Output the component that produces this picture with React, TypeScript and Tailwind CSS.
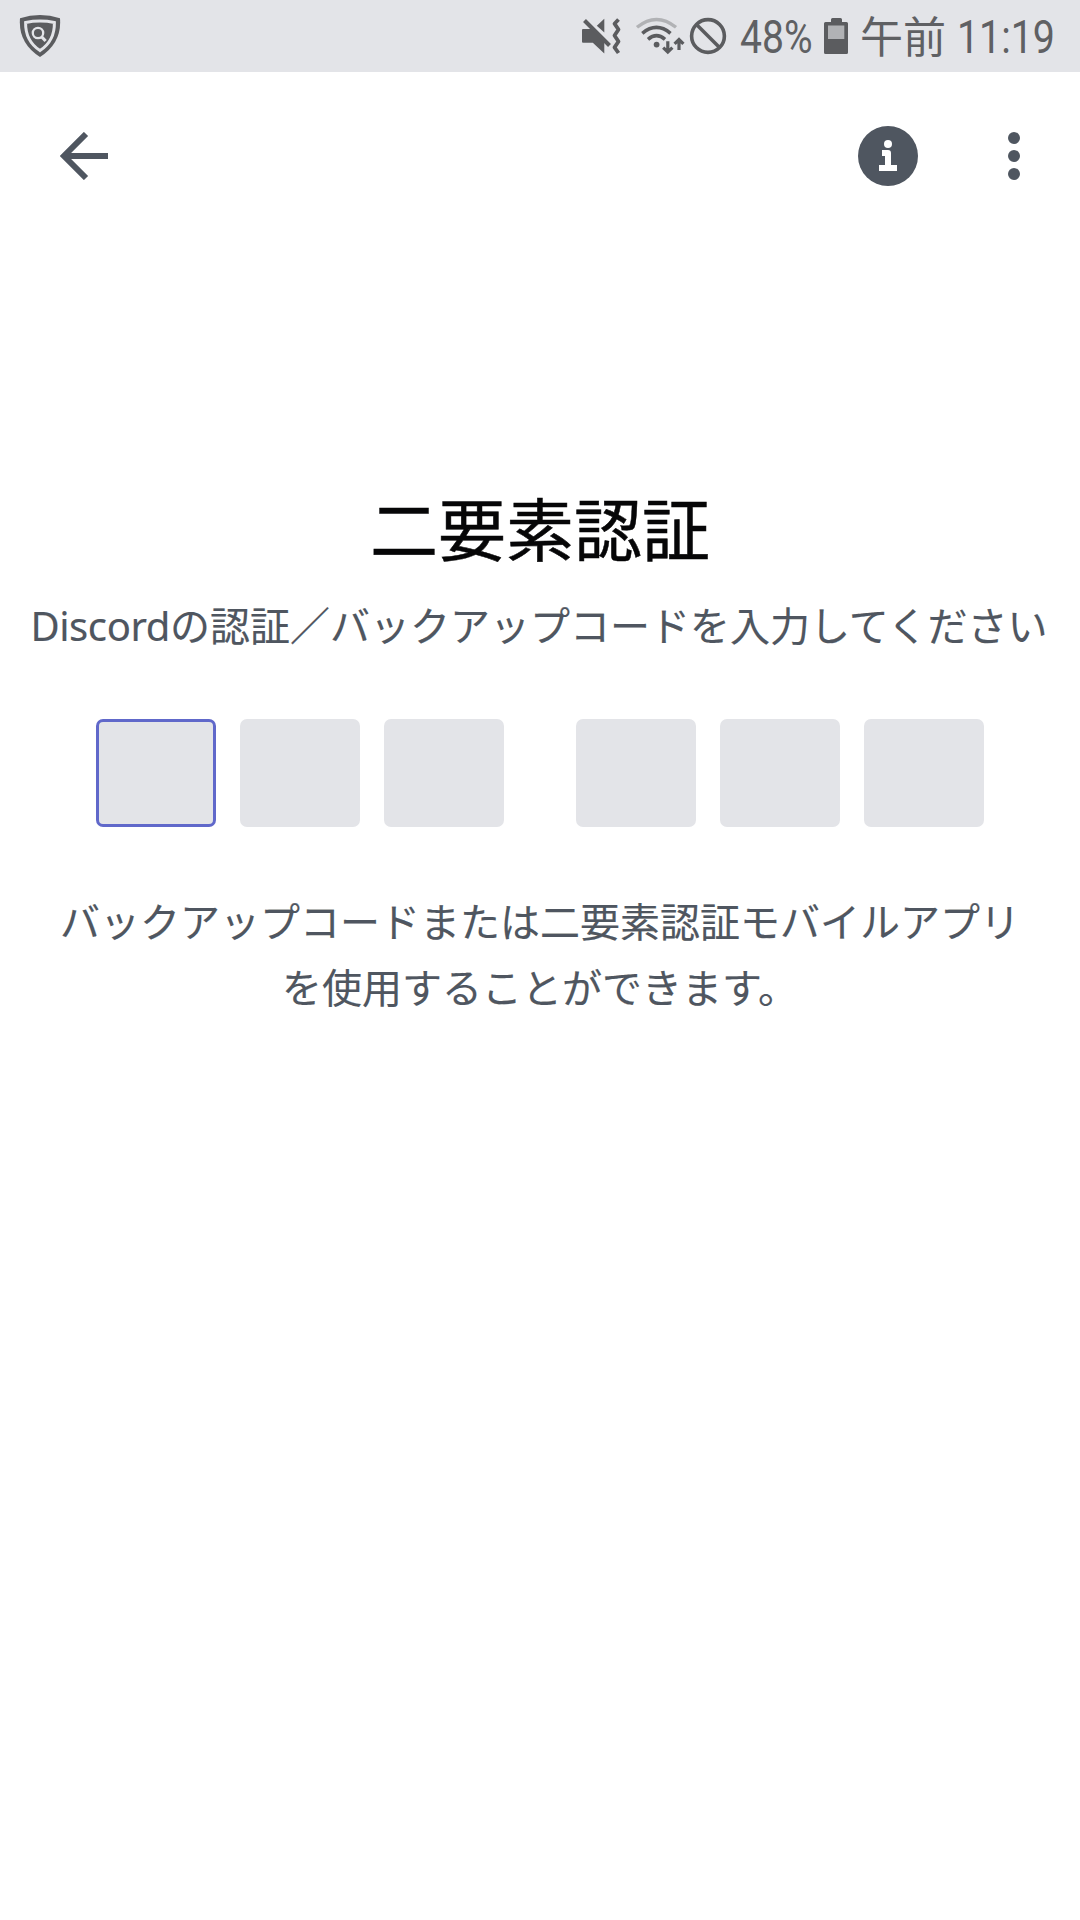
import React from 'react';

const GLYPH = '#5b5c5f';

function ShieldIcon() {
  return (
    <svg className="ml-[19px] h-[42px] w-[42px] shrink-0" viewBox="19 15 42 42" fill="none">
      <path d="M20 18.2Q40 11.8 60 18.2Q62 43 40 57Q18 43 20 18.2Z" fill={GLYPH} />
      <path d="M25.6 22.4Q40 19.8 54.4 22.4Q54.8 41 40 50.6Q25.2 41 25.6 22.4Z" fill={GLYPH} stroke="#e3e4e8" strokeWidth="3" />
      <circle cx="38" cy="33" r="5.2" stroke="#e3e4e8" strokeWidth="2.3" />
      <path d="M41.8 37L45.6 41" stroke="#e3e4e8" strokeWidth="3.2" />
    </svg>
  );
}

function MuteVibrateIcon() {
  return (
    <svg className="ml-[520px] h-[38px] w-[40px] shrink-0" viewBox="581 17 40 38" fill="none">
      <path d="M604.3 18.8V32.5L596.8 25.8Z" fill={GLYPH} />
      <path d="M583 29H591L604.3 42V53.5L592.8 42.7H583Q582 42.7 582 41.7V30Q582 29 583 29Z" fill={GLYPH} />
      <path d="M584.5 20.5L609.5 45.5" stroke={GLYPH} strokeWidth="4" />
      <path d="M618.5 19.5L614.5 23.7L618.5 29.5L614.5 35.5L618.5 41.5L614.5 47.3L618.5 53" stroke={GLYPH} strokeWidth="3.8" strokeLinejoin="round" />
    </svg>
  );
}

function WifiIcon() {
  return (
    <svg className="ml-[14px] h-[38px] w-[50px] shrink-0" viewBox="635 16 50 38" fill="none">
      <path d="M637 26.3Q656.5 10.5 676 26.3" stroke="#b1b2b5" strokeWidth="3.4" />
      <path d="M642.3 32.3Q656.5 20.5 670.5 32.3" stroke={GLYPH} strokeWidth="3.6" />
      <path d="M648 38.3Q656.5 31 665 38.3" stroke={GLYPH} strokeWidth="3.6" />
      <circle cx="656.6" cy="43.6" r="2.9" fill={GLYPH} />
      <path d="M667.8 40.2V51M663.2 46.6L667.8 51L672.4 46.6" stroke={GLYPH} strokeWidth="3.2" />
      <path d="M679 49V38.5M674.6 42.8L679 38.4L683.4 42.8" stroke={GLYPH} strokeWidth="3.2" />
    </svg>
  );
}

function BlockedIcon() {
  return (
    <svg className="ml-[4px] h-[38px] w-[38px] shrink-0" viewBox="689 16 38 38" fill="none" stroke={GLYPH} strokeWidth="3.6">
      <circle cx="708" cy="35" r="16.4" />
      <path d="M696.5 23.5L719.5 46.5" />
    </svg>
  );
}

function BatteryIcon() {
  return (
    <svg className="ml-[12px] h-[36px] w-[24px] shrink-0" viewBox="824 18 24 36">
      <path d="M832.5 18H840.5Q842 18 842 19.5V22H846.5Q848 22 848 23.5V52.5Q848 54 846.5 54H825.5Q824 54 824 52.5V23.5Q824 22 825.5 22H831V19.5Q831 18 832.5 18Z" fill={GLYPH} />
      <rect x="828" y="25.5" width="16.3" height="13.5" fill="#b1b2b5" />
    </svg>
  );
}

function StatusBar() {
  return (
    <header className="flex h-[72px] items-center bg-[#e3e4e8] text-[#5f6063]">
      <ShieldIcon />
      <MuteVibrateIcon />
      <WifiIcon />
      <BlockedIcon />
      <span className="ml-[13px] block w-[72px] origin-left scale-x-[0.85] whitespace-nowrap pt-[2px] font-['Roboto',sans-serif] text-[46px] leading-[72px]">48%</span>
      <BatteryIcon />
      <span className="ml-[12px] block w-[86px] whitespace-nowrap pb-[4px] font-['Noto_Sans_CJK_JP',sans-serif] text-[43px] leading-[72px]" lang="ja">午前</span>
      <span className="ml-[11px] block w-[97px] origin-left scale-x-[0.855] whitespace-nowrap pt-[2px] font-['Roboto',sans-serif] text-[46px] leading-[72px]">11:19</span>
    </header>
  );
}

function Toolbar() {
  return (
    <nav className="flex h-[168px] items-center text-[#4f5660]">
      <button aria-label="戻る" className="ml-[60px] block">
        <svg className="h-[48px] w-[48px]" viewBox="60 132 48 48" fill="none" stroke="currentColor" strokeWidth="6">
          <path d="M108 156H65M86 134L64 156L86 178" />
        </svg>
      </button>
      <button aria-label="情報" className="ml-[750px] block">
        <svg className="h-[60px] w-[60px]" viewBox="858 126 60 60">
          <circle cx="888" cy="156" r="30" fill="currentColor" />
          <circle cx="888" cy="144" r="4" fill="#fff" />
          <path d="M882 150H888Q891 150 891 153V165H897V171H879V165H885V156H882Z" fill="#fff" />
        </svg>
      </button>
      <button aria-label="メニュー" className="ml-[90px] block">
        <svg className="h-[48px] w-[12px]" viewBox="0 0 12 48" fill="currentColor">
          <circle cx="6" cy="6" r="6" />
          <circle cx="6" cy="24" r="6" />
          <circle cx="6" cy="42" r="6" />
        </svg>
      </button>
    </nav>
  );
}

function CodeBox({ active = false }: { active?: boolean }) {
  return (
    <div
      className={
        active
          ? 'h-[108px] w-[120px] rounded-[7px] border-3 border-[#6068ca] bg-[#e3e4e8]'
          : 'h-[108px] w-[120px] rounded-[7px] bg-[#e3e4e8]'
      }
    />
  );
}

export default function App() {
  return (
    <div className="flex h-[1920px] w-[1080px] flex-col overflow-hidden bg-white font-['Noto_Sans_CJK_JP',sans-serif]" lang="ja">
      <StatusBar />
      <Toolbar />
      <main className="flex flex-col items-center pt-[237px] text-[#4f5660]">
        <h1 className="h-[100px] whitespace-nowrap text-[68px] font-normal leading-[100px] text-[#060607] [-webkit-text-stroke:0.5px_currentColor]">二要素認証</h1>
        <p className="mt-[17px] h-[60px] whitespace-nowrap pr-[2px] text-[40px] leading-[60px] [-webkit-text-stroke:0.15px_currentColor]">
          <span className="font-['Noto_Sans',sans-serif] tracking-[-0.4px]">Discord</span>の認証／バックアップコードを入力してください
        </p>
        <div className="mt-[65px] flex gap-[72px]">
          <div className="flex gap-6">
            <CodeBox active />
            <CodeBox />
            <CodeBox />
          </div>
          <div className="flex gap-6">
            <CodeBox />
            <CodeBox />
            <CodeBox />
          </div>
        </div>
        <p className="mt-[60px] text-center text-[40px] leading-[66px] [-webkit-text-stroke:0.15px_currentColor]">
          バックアップコードまたは二要素認証モバイルアプリ
          <br />
          を使用することができます。
        </p>
      </main>
    </div>
  );
}
